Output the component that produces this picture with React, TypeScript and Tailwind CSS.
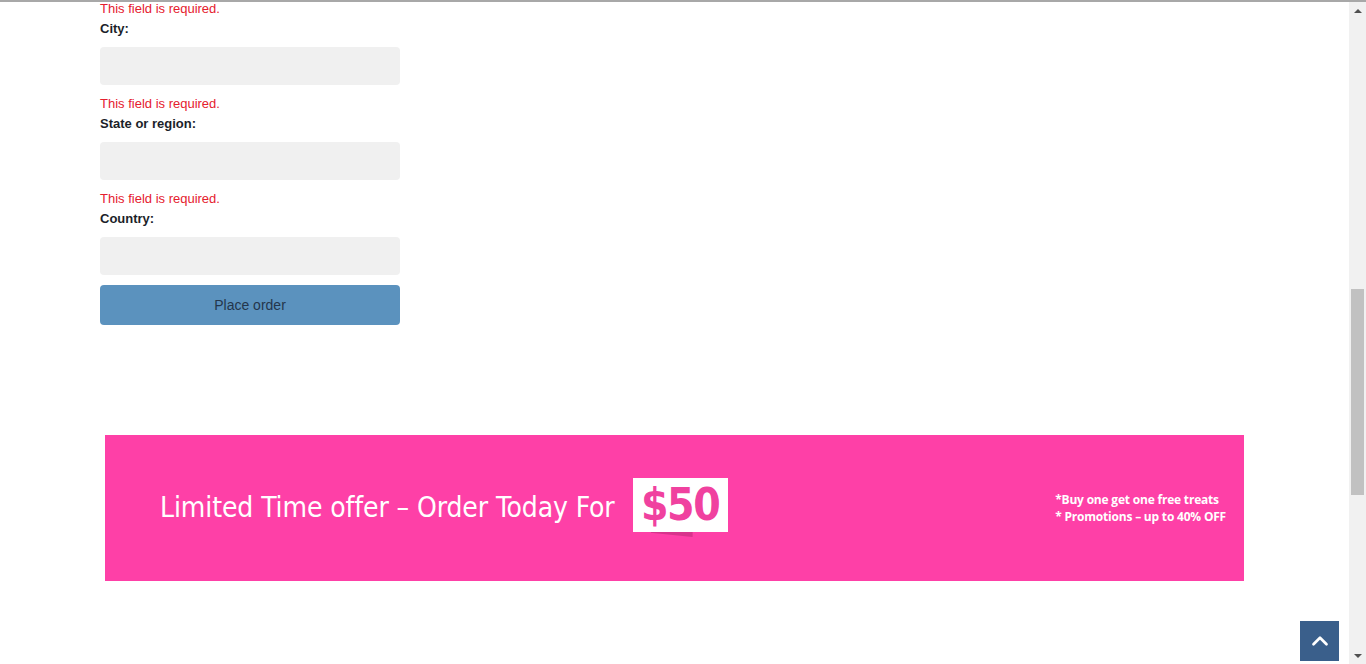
import { ChevronUp } from 'lucide-react';

const fields = ['City:', 'State or region:', 'Country:'];

function FieldError({ first }: { first?: boolean }) {
  return (
    <p className={`${first ? '-mt-[2px]' : 'mt-[10px]'} text-[13px] leading-[18px] text-[#e5202e]`}>
      This field is required.
    </p>
  );
}

function Field({ label, first }: { label: string; first?: boolean }) {
  return (
    <div>
      <FieldError first={first} />
      <label className="mt-[2px] block text-[13px] font-bold leading-[18px] text-[#1c1f2a]">{label}</label>
      <input type="text" className="mt-[9px] block h-[38px] w-[300px] rounded-[4px] bg-[#f0f0f0] px-3 outline-none" />
    </div>
  );
}

function PromoBanner() {
  return (
    <div className="mx-[5px] flex h-[146px] items-center justify-between bg-[#fe40a7] pl-[55px] pr-[18px]">
      <div className="flex items-center">
        <span
          className="text-[28px] tracking-[-0.1px] text-white"
          style={{ fontFamily: '"DejaVu Sans Condensed", "Open Sans", sans-serif' }}
        >
          Limited Time offer – Order Today For
        </span>
        <div className="relative ml-[18px] -mt-[6px]">
          <div className="absolute left-[18px] top-[52px] h-[7px] w-[42px] bg-[#d8338c] [clip-path:polygon(0_0,100%_0,100%_100%,0_40%)]" />
          <div
            className="relative flex h-[54px] w-[95px] items-center justify-center bg-white text-[44px] font-bold leading-none tracking-[-1.5px] text-[#f0419f]"
            style={{ fontFamily: '"DejaVu Sans Condensed", "Open Sans", sans-serif' }}
          >
            $50
          </div>
        </div>
      </div>
      <div
        className="text-[12px] font-bold leading-[17px] text-white"
        style={{ fontFamily: '"Open Sans", "DejaVu Sans Condensed", sans-serif' }}
      >
        <p className="tracking-[-0.2px]">*Buy one get one free treats</p>
        <p className="tracking-[-0.2px]">* Promotions – up to 40% OFF</p>
      </div>
    </div>
  );
}

function Scrollbar() {
  return (
    <div className="flex w-[17px] flex-col bg-[#f1f1f1]">
      <div className="flex h-[17px] items-center justify-center">
        <div className="h-0 w-0 border-x-[4px] border-b-[4px] border-x-transparent border-b-[#505050]" />
      </div>
      <div className="flex-1 px-[2px] pt-[270px]">
        <div className="h-[206px] bg-[#c1c1c1]" />
      </div>
      <div className="flex h-[17px] items-center justify-center">
        <div className="h-0 w-0 border-x-[4px] border-t-[4px] border-x-transparent border-t-[#505050]" />
      </div>
    </div>
  );
}

export default function App() {
  return (
    <div
      className="relative flex h-[664px] overflow-hidden border-t-2 border-[#a8a8a8] bg-white"
      style={{ fontFamily: '"Liberation Sans", Arial, sans-serif' }}
    >
      <main className="flex-1">
        <div className="mx-auto w-[1149px]">
          <form onSubmit={(e) => e.preventDefault()}>
            {fields.map((f, i) => (
              <Field key={f} label={f} first={i === 0} />
            ))}
            <button
              type="submit"
              className="mt-[10px] block h-[40px] w-[300px] rounded-[4px] bg-[#5b92be] text-[14px] text-[#24364c]"
            >
              Place order
            </button>
          </form>
          <div className="mt-[110px]">
            <PromoBanner />
          </div>
        </div>
      </main>
      <Scrollbar />
      <button
        type="button"
        className="absolute left-[1300px] top-[619px] flex h-[40px] w-[39px] items-center justify-center bg-[#3a5f8b] text-white"
      >
        <ChevronUp size={26} strokeWidth={2.5} />
      </button>
    </div>
  );
}
